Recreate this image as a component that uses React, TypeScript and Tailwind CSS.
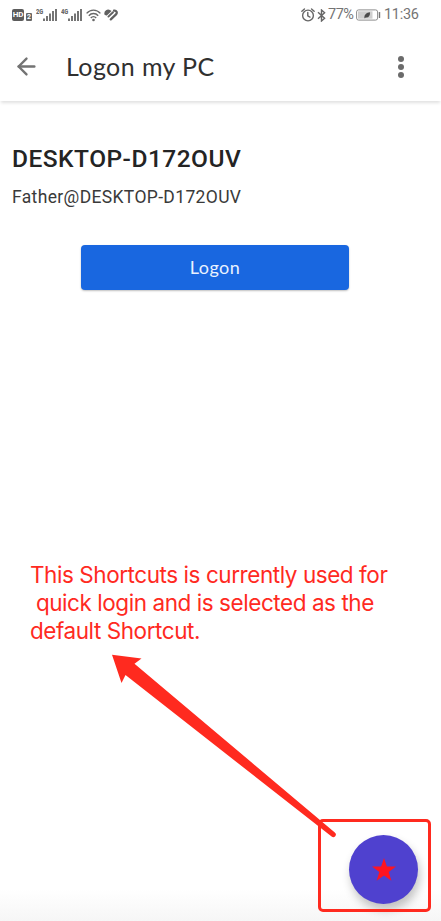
import React from 'react';
import { ArrowLeft } from 'lucide-react';

function SignalBars() {
  return (
    <svg width="14" height="12" viewBox="0 0 14 12" fill="#747474">
      <rect x="0" y="9.5" width="2" height="2.5" />
      <rect x="3" y="7" width="2" height="5" />
      <rect x="6" y="4.5" width="2" height="7.5" />
      <rect x="9" y="2" width="2" height="10" />
      <rect x="12" y="0" width="2" height="12" />
    </svg>
  );
}

function StatusBar() {
  return (
    <div className="h-[30px] flex items-center justify-between pl-3 pr-[21px] text-[#666666]">
      <div className="flex items-center">
        <span className="w-3 h-3 rounded-[2px] bg-[#5c5c5c] text-white text-[8px] leading-3 font-bold tracking-[-0.2px] text-center font-['Roboto']">HD</span>
        <span className="ml-0.5 mt-1 w-[6px] h-2 rounded-[1px] bg-[#666666] text-white text-[7px] leading-2 font-bold text-center font-['Roboto']">2</span>
        <span className="ml-1 -mt-[7px] w-[7px] text-[8px] leading-[8px] font-black origin-left scale-x-[0.72] font-['Roboto']">2G</span>
        <SignalBars />
        <span className="ml-[4px] -mt-[7px] w-[7px] text-[8px] leading-[8px] font-black origin-left scale-x-[0.72] font-['Roboto']">4G</span>
        <SignalBars />
        {/* Wi-Fi */}
        <svg className="ml-1" width="15" height="13" viewBox="0 0 15 13" fill="none" stroke="#686868" strokeWidth="1.4">
          <path d="M0.6 4.4C4.4 0 10.6 0 14.4 4.4" />
          <path d="M2.8 6.8C5.4 3.8 9.6 3.8 12.2 6.8" />
          <path d="M4.8 9C6.3 7.2 8.7 7.2 10.2 9" />
          <circle cx="7.5" cy="11" r="1.3" fill="#686868" stroke="none" />
        </svg>
        {/* Health */}
        <svg className="ml-[3px]" width="14" height="12" viewBox="0 0 14 12" fill="none" stroke="#606060" strokeLinecap="round">
          <path d="M1.5 5C1 2.4 3.6 0.8 5.8 2.2L2.4 5.4" strokeWidth="2.2" />
          <path d="M4.4 7.6L9 3.2" strokeWidth="1.9" />
          <path d="M10 1.6C12.6 1.2 13.6 3.6 12 5.4L6.8 10.4" strokeWidth="2.2" />
        </svg>
      </div>
      <div className="flex items-center font-['Roboto'] text-[14.5px] leading-none">
        {/* Alarm */}
        <svg width="14" height="14" viewBox="0 0 13 13" fill="none" stroke="#666666" strokeWidth="1.3" strokeLinecap="round">
          <circle cx="6.5" cy="7" r="5" />
          <path d="M6.3 4.2V7.2L8.3 8.4M0.8 3L3.2 0.9M12.2 3L9.8 0.9" />
        </svg>
        {/* Bluetooth */}
        <svg className="ml-[2px] mr-px" width="9" height="13" viewBox="0 0 9 13" fill="none" stroke="#666666" strokeWidth="1.4">
          <path d="M1 3.3L7.6 9.3L4.5 12V1L7.6 3.7L1 9.7" />
        </svg>
        <span className="mt-px ml-px w-[28px] tracking-[-0.5px] text-[#747474]">77%</span>
        {/* Battery */}
        <svg width="25" height="12" viewBox="0 0 25 12" fill="none">
          <rect x="0.6" y="0.9" width="21" height="10.2" rx="2" stroke="#8c8c8c" />
          <rect x="2" y="2.3" width="14.5" height="7.4" fill="#cfcfcf" />
          <path d="M8.4 8.8C8.2 5.4 10.6 3.6 14 3.2C14.2 6.8 12.6 9 9.6 8.4L8.8 9.4Z" fill="#4b4b4b" />
          <rect x="22.8" y="3" width="1.4" height="6" rx="0.6" fill="#777777" />
        </svg>
        <span className="ml-[3px] mt-px w-[36px] whitespace-nowrap tracking-[-0.3px] text-[#747474]">11:36</span>
      </div>
    </div>
  );
}

function Header() {
  return (
    <header className="h-[71px] flex items-center px-[13px] shadow-[0_3px_3px_-1px_rgba(0,0,0,0.12)]">
      <button className="mt-[2px] w-[26px] h-[26px] flex items-center justify-center">
        <ArrowLeft className="w-[27px] h-[27px] shrink-0 text-[#737373]" strokeWidth={2.1} />
      </button>
      <h1 className="ml-[27px] font-['Lato'] text-[25px] leading-8 tracking-[0.42px] text-[#303030] whitespace-nowrap">Logon my PC</h1>
      <button className="ml-auto mt-[2px] mr-[24px] flex flex-col gap-[2px]">
        <span className="w-[6px] h-[6px] rounded-full bg-[#6b6b6b]" />
        <span className="w-[6px] h-[6px] rounded-full bg-[#6b6b6b]" />
        <span className="w-[6px] h-[6px] rounded-full bg-[#6b6b6b]" />
      </button>
    </header>
  );
}

export default function App() {
  return (
    <div className="relative w-full h-[921px] overflow-hidden bg-white flex flex-col">
      <StatusBar />
      <Header />

      <main className="px-3 pt-[43px]">
        <h2 className="font-['Roboto'] text-[24.5px] leading-[30px] font-medium tracking-[0.48px] text-[#242424] whitespace-nowrap">DESKTOP-D172OUV</h2>
        <p className="mt-3 font-['Roboto'] text-[17.5px] leading-[22px] tracking-[0.35px] text-[#3a3a3a] whitespace-nowrap">Father@DESKTOP-D172OUV</p>
        <button className="mt-[37px] ml-[69px] w-[268px] h-[45px] block rounded-[4px] bg-[#1967e0] text-[#e9f2ff] font-['Lato'] text-[18px] tracking-[0.5px] shadow-[0_1px_2px_rgba(0,0,0,0.25)]">
          Logon
        </button>
      </main>

      <p className="mt-auto mb-[276px] ml-[30px] font-['Inter'] text-[22.5px] leading-7 tracking-[-0.44px] text-[#ff2a1f] whitespace-pre">
        {'This Shortcuts is currently used for\n quick login and is selected as the\ndefault Shortcut.'}
      </p>

      <div className="absolute inset-x-0 bottom-0 h-8 bg-gradient-to-b from-white to-[#f6f6f6]" />

      {/* Floating shortcut button */}
      <button className="absolute left-[349px] top-[835px] w-[69px] h-[69px] rounded-full bg-[#4f41cf] flex items-center justify-center shadow-[2px_6px_10px_rgba(0,0,0,0.24)]">
        <svg width="24" height="24" viewBox="0 0 24 24" fill="#ff1420">
          <path d="M12 0L14.9 8.6H24L16.7 14L19.4 22.8L12 17.5L4.6 22.8L7.3 14L0 8.6H9.1Z" />
        </svg>
      </button>

      {/* Callout frame and arrow */}
      <div className="absolute left-[318px] top-[819px] w-[113px] h-[93px] rounded-[5px] border-[3px] border-[#ff2a1f]" />
      <svg className="absolute left-0 top-[640px]" width="441" height="220" viewBox="0 0 441 220" fill="#ff2a1f">
        <path d="M112 14.8L141.5 18.5L134.5 23.8L334.8 192.5A2.6 2.6 0 0 1 331.6 196.6L125.5 35L121.5 43Z" />
      </svg>
    </div>
  );
}
